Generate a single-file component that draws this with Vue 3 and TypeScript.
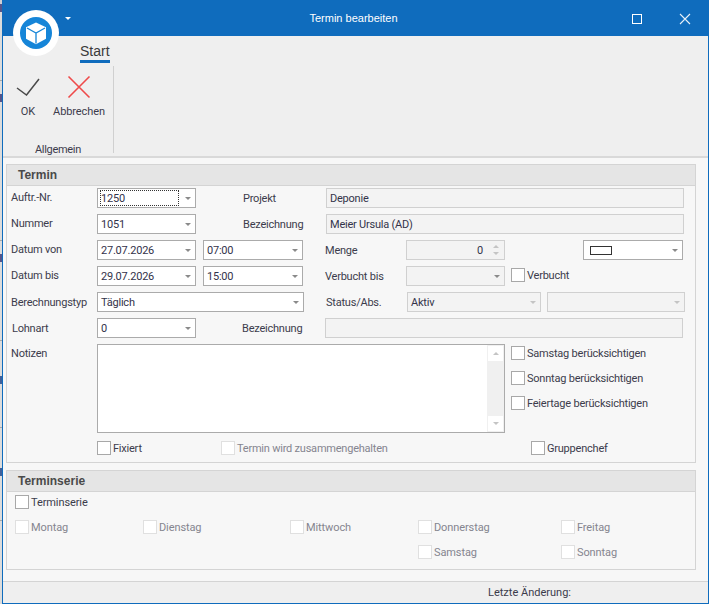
<template>
  <div class="desktop">
    <div class="strip"></div>
    <div class="window">
      <header class="titlebar">
        <span class="qat-arrow"></span>
        <span class="title">Termin bearbeiten</span>
        <div class="win-buttons">
          <svg width="12" height="12" viewBox="0 0 12 12"><rect x="1.5" y="1.5" width="9" height="9" fill="none" stroke="#fff" /></svg>
          <svg width="14" height="14" viewBox="0 0 14 14"><path d="M2 2l10 10M12 2L2 12" stroke="#e8f0f8" stroke-width="1.1" fill="none" /></svg>
        </div>
      </header>
      <div class="logo">
        <svg width="46" height="46" viewBox="0 0 46 46">
          <circle cx="23" cy="23" r="16" fill="#1585d8" />
          <path d="M23 12.5l10 4.8v11.4l-10 5.6-10-5.6V17.300z" fill="#fff" />
          <path d="M14 18l9 5 9-5M23 23v10.500" fill="none" stroke="#1585d8" stroke-width="1.3" />
        </svg>
      </div>

      <section class="ribbon">
        <div class="tabs"><span class="tab">Start</span></div>
        <div class="ribbon-body">
          <div class="group">
            <div class="group-items">
              <button class="big-btn ok">
                <svg width="24" height="18" viewBox="0 0 24 18"><path d="M1 10l9.500 7L23 1" fill="none" stroke="#4a4a4a" stroke-width="1.500" /></svg>
                <span>OK</span>
              </button>
              <button class="big-btn cancel">
                <svg width="24" height="24" viewBox="0 0 24 24"><path d="M1.500 1.500l21 21M22.500 1.500l-21 21" fill="none" stroke="#ef4a4a" stroke-width="1.600" /></svg>
                <span>Abbrechen</span>
              </button>
            </div>
            <div class="group-name">Allgemein</div>
          </div>
        </div>
      </section>

      <main class="content">
        <section class="panel termin">
          <h2 class="panel-head">Termin</h2>
          <div class="form">
            <div class="row">
              <label class="lbl up1">Auftr.-Nr.</label>
              <div class="combo w99"><span class="dotted">1250</span><b class="caret"></b></div>
              <label class="lbl mid">Projekt</label>
              <div class="input ro w358">Deponie</div>
            </div>
            <div class="row">
              <label class="lbl up1">Nummer</label>
              <div class="combo w99"><span>1051</span><b class="caret"></b></div>
              <label class="lbl mid">Bezeichnung</label>
              <div class="input ro w358">Meier Ursula (AD)</div>
            </div>
            <div class="row">
              <label class="lbl up1">Datum von</label>
              <div class="combo w99"><span>27.07.2026</span><b class="caret"></b></div>
              <div class="combo w100 ml7"><span>07:00</span><b class="caret"></b></div>
              <label class="lbl right">Menge</label>
              <div class="spin w99">
                <span>0</span>
                <span class="spin-arrows"><b class="up"></b><b class="caret"></b></span>
              </div>
              <div class="combo w100 color"><span class="swatch"></span><b class="caret"></b></div>
            </div>
            <div class="row">
              <label class="lbl up1">Datum bis</label>
              <div class="combo w99"><span>29.07.2026</span><b class="caret"></b></div>
              <div class="combo w100 ml7"><span>15:00</span><b class="caret"></b></div>
              <label class="lbl right">Verbucht bis</label>
              <div class="combo w99 soft"><span></span><b class="caret"></b></div>
              <label class="check ml6 up1"><i class="box"></i>Verbucht</label>
            </div>
            <div class="row">
              <label class="lbl">Berechnungstyp</label>
              <div class="combo w207"><span>Täglich</span><b class="caret"></b></div>
              <label class="lbl right">Status/Abs.</label>
              <div class="combo w134 soft"><span>Aktiv</span><b class="caret pale"></b></div>
              <div class="combo w138 soft ml6"><span></span><b class="caret pale"></b></div>
            </div>
            <div class="row">
              <label class="lbl lohn">Lohnart</label>
              <div class="combo w99"><span>0</span><b class="caret"></b></div>
              <label class="lbl mid tight">Bezeichnung</label>
              <div class="input ro w358"></div>
            </div>
            <div class="notes-row">
              <label class="lbl notes-lbl">Notizen</label>
              <div class="memo">
                <div class="scroll">
                  <span class="sb-btn"><b class="up pale"></b></span>
                  <span class="sb-btn"><b class="caret pale"></b></span>
                </div>
              </div>
              <div class="side-checks">
                <label v-for="c in sideChecks" :key="c" class="check"><i class="box"></i>{{ c }}</label>
              </div>
            </div>
            <div class="flags">
              <label class="check"><i class="box"></i>Fixiert</label>
              <label class="check off"><i class="box"></i>Termin wird zusammengehalten</label>
              <label class="check"><i class="box"></i>Gruppenchef</label>
            </div>
          </div>
        </section>

        <section class="panel serie">
          <h2 class="panel-head">Terminserie</h2>
          <div class="serie-body">
            <label class="check"><i class="box"></i>Terminserie</label>
            <div class="days">
              <label v-for="d in days" :key="d" class="check off"><i class="box"></i>{{ d }}</label>
            </div>
            <div class="days weekend">
              <label v-for="d in weekend" :key="d" class="check off"><i class="box"></i>{{ d }}</label>
            </div>
          </div>
        </section>
      </main>

      <footer class="status">Letzte Änderung:</footer>
    </div>
  </div>
</template>

<script setup lang="ts">
const sideChecks: string[] = ['Samstag berücksichtigen', 'Sonntag berücksichtigen', 'Feiertage berücksichtigen']
const days: string[] = ['Montag', 'Dienstag', 'Mittwoch', 'Donnerstag', 'Freitag']
const weekend: string[] = ['Samstag', 'Sonntag']
</script>

<style>
html, body {
  margin: 0;
  overflow: hidden;
}
</style>

<style scoped>
.desktop {
  width: 709px;
  height: 604px;
  display: flex;
  background: #f4f4f4;
  font-family: Roboto, "Liberation Sans", Arial, sans-serif;
  font-size: 11px;
  color: #3c3c4c;
}
.strip {
  width: 2px;
  background: linear-gradient(to bottom,
    #cfcfd4 0 4px, #55558a 4px 12px, #dcdcdc 12px 80px, #a8a8a8 80px 81px,
    #dcdcdc 81px 94px, #55558a 94px 102px, #dcdcdc 102px 240px, #a8a8a8 240px 241px,
    #dcdcdc 241px 254px, #55558a 254px 262px, #dcdcdc 262px 340px, #a8a8a8 340px 341px,
    #dcdcdc 341px 376px, #40609a 376px 384px, #dcdcdc 384px 427px, #a8a8a8 427px 428px,
    #dcdcdc 428px 468px, #40609a 468px 476px, #dcdcdc 476px 520px, #a8a8a8 520px 521px,
    #dcdcdc 521px 100%);
}
.window {
  position: relative;
  flex: 1;
  display: flex;
  flex-direction: column;
  border: 1px solid #0f6cbd;
  border-top: 0;
  box-sizing: border-box;
  background: #efefef;
  min-width: 0;
}
.titlebar {
  position: relative;
  height: 36px;
  flex: none;
  background: #0f6cbd;
  display: flex;
  align-items: center;
  justify-content: center;
  color: #fff;
}
.title {
  font-family: "Liberation Sans", Arial, sans-serif;
  margin-left: -4px;
}
.qat-arrow {
  position: absolute;
  left: 62px;
  top: 17px;
  border: 3px solid transparent;
  border-top-color: #fff;
  border-bottom: 0;
}
.win-buttons {
  position: absolute;
  right: 0;
  top: 12px;
  display: flex;
  align-items: center;
  gap: 35px;
  padding-right: 16px;
}
.logo {
  position: absolute;
  left: 10px;
  top: 10px;
  width: 46px;
  height: 46px;
  border-radius: 50%;
  background: #fff;
}
.ribbon {
  flex: none;
  height: 122px;
  border-bottom: 2px solid #d9d9d9;
  box-sizing: border-box;
  display: flex;
  flex-direction: column;
}
.tabs {
  height: 26px;
  padding-left: 77px;
  box-sizing: border-box;
}
.tab {
  display: inline-block;
  font-family: "Liberation Sans", Arial, sans-serif;
  font-size: 14px;
  line-height: 16px;
  margin-top: 7px;
  padding-bottom: 1px;
  border-bottom: 3px solid #0f6cbd;
  color: #3a3a3a;
}
.ribbon-body {
  flex: 1;
  padding-top: 4px;
}
.group {
  width: 110px;
  height: 87px;
  border-right: 1px solid #d0d0d0;
  display: flex;
  flex-direction: column;
}
.group-items {
  display: flex;
  flex: 1;
}
.big-btn {
  border: 0;
  background: none;
  padding: 0;
  font: inherit;
  letter-spacing: -0.1px;
  color: inherit;
  display: flex;
  flex-direction: column;
  align-items: center;
}
.big-btn svg {
  display: block;
}
.big-btn.ok {
  width: 50px;
}
.big-btn.ok svg {
  margin-top: 12px;
}
.big-btn.ok span {
  margin-top: 9px;
}
.big-btn.cancel {
  width: 52px;
}
.big-btn.cancel svg {
  margin-top: 9px;
}
.big-btn.cancel span {
  margin-top: 6px;
}
.group-name {
  text-align: center;
  height: 11px;
  line-height: 11px;
  margin-bottom: -2px;
  letter-spacing: -0.3px;
}
.content {
  flex: 1;
  background: #f7f7f7;
  padding: 6px 12px 0 3px;
  display: flex;
  flex-direction: column;
  gap: 7px;
  border-bottom: 1px solid #d4d4d4;
  box-sizing: border-box;
  min-height: 0;
}
.panel {
  border: 1px solid #d4d4d4;
  box-sizing: border-box;
}
.panel.termin {
  height: 299px;
}
.panel.serie {
  height: 100px;
}
.panel-head {
  margin: 0;
  height: 21px;
  line-height: 20px;
  box-sizing: border-box;
  padding-left: 11px;
  font-family: "Liberation Sans", Arial, sans-serif;
  font-size: 12px;
  font-weight: bold;
  color: #4a4a4a;
  background: #e5e5e5;
  border-bottom: 1px solid #d4d4d4;
}
.form {
  padding: 2px 0 0 4px;
  display: flex;
  flex-direction: column;
  gap: 6px;
  letter-spacing: -0.22px;
}
.row {
  display: flex;
  align-items: center;
  height: 20px;
}
.lbl {
  flex: none;
  width: 86px;
}
.up1 {
  margin-bottom: 2px;
}
.lbl.lohn {
  width: 85px;
  padding-left: 1px;
}
.notes-lbl {
  padding-top: 3px;
}
.lbl.mid {
  width: 83px;
  margin-left: 47px;
}
.lbl.mid.tight {
  margin-left: 46px;
}
.lbl.right {
  width: 81px;
  margin-left: 22px;
}
.combo,
.input,
.spin {
  flex: none;
  height: 20px;
  box-sizing: border-box;
  border: 1px solid #ababab;
  background: #fff;
  display: flex;
  align-items: center;
  padding-left: 3px;
  color: #33334a;
}
.combo span:first-child {
  flex: 1;
  min-width: 0;
}
.dotted {
  outline: 1px dotted #333;
  outline-offset: -1px;
  height: 16px;
  line-height: 17px;
  margin-left: -1px;
  margin-right: 2px;
  padding-left: 1px;
}
.caret {
  flex: none;
  width: 0;
  height: 0;
  margin: 1px 4px 0;
  border: 3px solid transparent;
  border-top-color: #8a8a8a;
  border-bottom: 0;
}
.caret.pale {
  border-top-color: #c4c4c4;
}
.up {
  display: block;
  width: 0;
  height: 0;
  border: 3px solid transparent;
  border-bottom-color: #c4c4c4;
  border-top: 0;
}
.ro,
.soft,
.spin {
  background: #f3f3f3;
  border-color: #d0d0d0;
}
.w99 { width: 99px; }
.w100 { width: 100px; }
.w207 { width: 207px; }
.w134 { width: 134px; }
.w138 { width: 138px; }
.w358 { width: 358px; }
.ml7 { margin-left: 7px; }
.ml6 { margin-left: 6px; }
.color {
  margin-left: 78px;
}
.swatch {
  flex: none !important;
  width: 22px !important;
  height: 9px;
  box-sizing: border-box;
  border: 1px solid #333;
  background: #fff;
  margin-left: 3px;
  margin-right: auto;
}
.spin {
  justify-content: flex-end;
}
.spin-arrows {
  display: flex;
  flex-direction: column;
  align-items: center;
  gap: 4px;
  width: 17px;
  margin-left: 4px;
}
.spin-arrows .caret {
  margin: 0;
  border-top-color: #c4c4c4;
}
.notes-row {
  display: flex;
  height: 90px;
}
.memo {
  flex: none;
  width: 408px;
  height: 89px;
  box-sizing: border-box;
  border: 1px solid #ababab;
  background: #fff;
  display: flex;
  justify-content: flex-end;
}
.scroll {
  width: 17px;
  background: #f0f0f0;
  display: flex;
  flex-direction: column;
  justify-content: space-between;
  padding: 1px;
  box-sizing: border-box;
}
.sb-btn {
  height: 15px;
  background: #fff;
  display: flex;
  align-items: center;
  justify-content: center;
}
.sb-btn .caret {
  margin: 0;
}
.side-checks {
  margin-left: 6px;
  display: flex;
  flex-direction: column;
  gap: 11px;
  padding-top: 2px;
}
.check {
  display: flex;
  align-items: center;
  height: 14px;
  color: #3c3c4c;
  white-space: nowrap;
}
.box {
  flex: none;
  width: 14px;
  height: 14px;
  box-sizing: border-box;
  border: 1px solid #a8a8a8;
  background: #fff;
  margin-right: 2px;
}
.off {
  color: #85858f;
}
.off .box {
  border-color: #e0e0e0;
}
.flags {
  display: grid;
  grid-template-columns: 124px 310px auto;
  margin-top: 1px;
  padding-left: 86px;
}
.serie-body {
  padding: 3px 0 0 8px;
  display: flex;
  flex-direction: column;
  letter-spacing: -0.1px;
}
.days {
  display: grid;
  grid-template-columns: 128px 147px 128px 143px 100px;
  margin-top: 11px;
}
.weekend {
  grid-template-columns: 143px 100px;
  padding-left: 403px;
}
.status {
  flex: none;
  height: 21px;
  line-height: 22px;
  padding-left: 485px;
  background: #efefef;
  color: #3c3c4c;
}
</style>
